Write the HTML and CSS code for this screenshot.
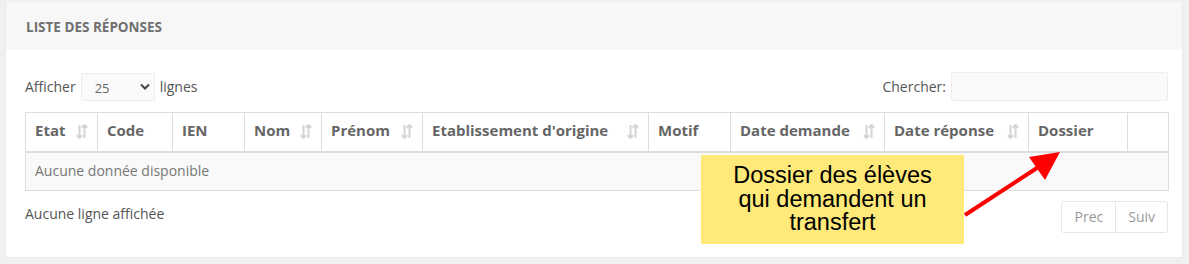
FILE: index.html
```html
<!DOCTYPE html>
<html lang="fr">
<head>
    <meta charset="UTF-8">
    <title>Liste des réponses</title>
    <link rel="stylesheet" href="styles.css">
</head>
<body>
    <div class="panel">
        <div class="panel-heading">Liste des réponses</div>
        <div class="panel-body">
            <div class="toolbar">
                <div class="length">
                    Afficher
                    <span class="fake-select">25
                        <svg width="10" height="7" viewBox="0 0 10 7"><path d="M1 1.5 L5 5.5 L9 1.5" fill="none" stroke="#444" stroke-width="2"/></svg>
                    </span>
                    lignes
                </div>
                <div class="search">
                    Chercher:
                    <span class="fake-input"></span>
                </div>
            </div>

            <table class="data">
                <colgroup>
                    <col style="width:72px"><col style="width:75px"><col style="width:72px">
                    <col style="width:77px"><col style="width:101px"><col style="width:226px">
                    <col style="width:82px"><col style="width:154px"><col style="width:144px">
                    <col style="width:99px"><col style="width:41px">
                </colgroup>
                <thead>
                    <tr>
                        <th class="sort">Etat</th>
                        <th>Code</th>
                        <th>IEN</th>
                        <th class="sort">Nom</th>
                        <th class="sort">Prénom</th>
                        <th class="sort">Etablissement d'origine</th>
                        <th>Motif</th>
                        <th class="sort">Date demande</th>
                        <th class="sort">Date réponse</th>
                        <th>Dossier</th>
                        <th></th>
                    </tr>
                </thead>
                <tbody>
                    <tr><td colspan="11" class="empty">Aucune donnée disponible</td></tr>
                </tbody>
            </table>

            <div class="footer">
                <div class="info">Aucune ligne affichée</div>
                <div class="pager">
                    <span class="page-btn">Prec</span>
                    <span class="page-btn">Suiv</span>
                </div>
            </div>
        </div>

        <div class="callout">Dossier des élèves<br>qui demandent un<br>transfert</div>
        <svg class="arrow" width="110" height="80" viewBox="0 0 110 80">
            <line x1="4" y1="66" x2="76" y2="19" stroke="#ff0000" stroke-width="4"/>
            <polygon points="99,3 68,8 84,31" fill="#ff0000"/>
        </svg>
    </div>
</body>
</html>
```

FILE: styles.css
```css
body {
    margin: 0;
    background: #f0f0f0;
    font-family: "Open Sans", Arial, sans-serif;
    color: #555;
}
.panel {
    position: relative;
    margin: 2px 6px 0 5px;
    height: 256px;
    background: #fff;
    border: 1px solid #eaeaea;
    border-top: none;
    box-sizing: border-box;
}
.panel-heading {
    height: 48px;
    line-height: 50px;
    padding-left: 20px;
    background: #f7f7f7;
    text-transform: uppercase;
    font-size: 13.5px;
    font-weight: 700;
    color: #707070;
}
.panel-body {
    padding: 22px 14px 0 19px;
}
.toolbar {
    display: flex;
    justify-content: space-between;
    align-items: center;
    height: 29px;
    font-size: 14px;
    color: #555;
}
.length, .search {
    display: flex;
    align-items: center;
    gap: 5px;
}
.fake-select {
    display: flex;
    align-items: center;
    justify-content: space-between;
    box-sizing: border-box;
    width: 74px;
    height: 28px;
    padding: 2px 0 0 13px;
    background: #fafafa;
    border: 1px solid #eee;
    border-radius: 2px;
    font-size: 13px;
    color: #666;
}
.fake-select svg {
    margin-right: 4px;
    margin-top: -2px;
}
.fake-input {
    display: block;
    width: 217px;
    height: 29px;
    box-sizing: border-box;
    background: #fafafa;
    border: 1px solid #eee;
    border-radius: 2px;
}
.data {
    width: 1143px;
    margin-top: 11px;
    border-collapse: collapse;
    table-layout: fixed;
}
.data th {
    height: 39px;
    padding: 0 9px 3px;
    box-sizing: border-box;
    text-align: left;
    font-size: 15px;
    font-weight: 700;
    color: #666;
    border: 1px solid #ddd;
    border-bottom-width: 2px;
    white-space: nowrap;
}
.data th.sort {
    background-image: url("data:image/svg+xml;utf8,<svg xmlns='http://www.w3.org/2000/svg' width='12' height='15' viewBox='0 0 12 15'><path d='M3.5 1 V14 M0.8 11.2 L3.5 14 L6.2 11.2' fill='none' stroke='%23d4d4d4' stroke-width='2'/><path d='M8.5 14 V1 M5.8 3.8 L8.5 1 L11.2 3.8' fill='none' stroke='%23d4d4d4' stroke-width='2'/></svg>");
    background-repeat: no-repeat;
    background-position: right 9px center;
}
.data td.empty {
    height: 39px;
    padding: 0 9px 1px;
    box-sizing: border-box;
    background: #f9f9f9;
    border: 1px solid #ddd;
    font-size: 14px;
    color: #777;
}
.footer {
    display: flex;
    justify-content: space-between;
    align-items: flex-start;
    margin-top: 10px;
}
.info {
    padding-top: 3px;
    font-size: 14px;
    color: #555;
}
.pager {
    display: flex;
    border: 1px solid #e6e6e6;
    border-radius: 3px;
}
.page-btn {
    display: block;
    height: 30px;
    line-height: 30px;
    padding: 0 12px;
    font-size: 14px;
    color: #999;
}
.page-btn + .page-btn {
    border-left: 1px solid #e6e6e6;
}
.callout {
    position: absolute;
    left: 695px;
    top: 153px;
    width: 263px;
    height: 89px;
    box-sizing: border-box;
    padding-top: 9px;
    background: #fee979;
    font-family: "Liberation Sans", Arial, sans-serif;
    font-size: 23.5px;
    line-height: 23.5px;
    color: #000;
    text-align: center;
}
.arrow {
    position: absolute;
    left: 955px;
    top: 147px;
}
```
